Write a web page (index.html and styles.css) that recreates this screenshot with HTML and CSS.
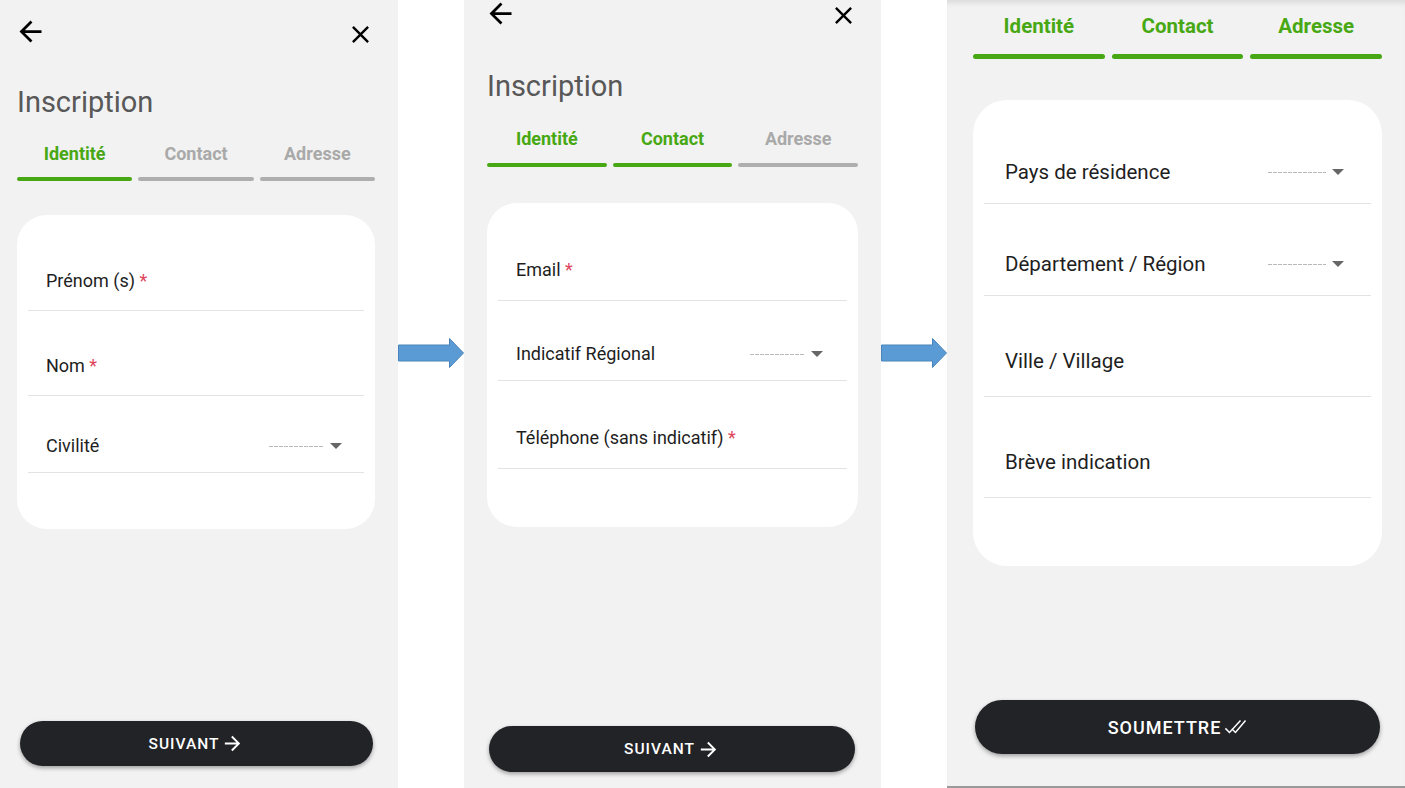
FILE: index.html
```html
<!DOCTYPE html>
<html lang="fr">
<head>
    <meta charset="UTF-8">
    <meta name="viewport" content="width=device-width, initial-scale=1.0">
    <title>Inscription - étapes</title>
    <link rel="stylesheet" href="styles.css">
</head>
<body>
    <div class="board">
        <!-- Step 1 : identité -->
        <section class="screen screen-1">
            <div class="topbar">
                <svg class="icon-back" viewBox="0 0 24 24"><path d="M20 11H7.83l5.59-5.59L12 4l-8 8 8 8 1.41-1.41L7.83 13H20v-2z"/></svg>
                <svg class="icon-close" viewBox="0 0 24 24"><path d="M19 6.41L17.59 5 12 10.59 6.41 5 5 6.41 10.59 12 5 17.59 6.41 19 12 13.41 17.59 19 19 17.59 13.41 12z"/></svg>
            </div>
            <h1 class="title">Inscription</h1>
            <div class="tabs">
                <div class="tab done"><span>Identité</span><i></i></div>
                <div class="tab"><span>Contact</span><i></i></div>
                <div class="tab"><span>Adresse</span><i></i></div>
            </div>
            <div class="card">
                <div class="field f-a"><span>Prénom (s) <b>*</b></span></div>
                <div class="field f-b"><span>Nom <b>*</b></span></div>
                <div class="field f-c select"><span>Civilité</span>
                    <span class="picker"><span class="dashes"></span><span class="caret"></span></span>
                </div>
            </div>
            <button class="btn">SUIVANT
                <svg viewBox="0 0 24 24"><path d="M4 11h12.17l-5.59-5.59L12 4l8 8-8 8-1.41-1.41L16.17 13H4z"/></svg>
            </button>
        </section>

        <div class="gap">
            <svg class="flow" viewBox="0 0 67 30"><path d="M0.5 7h51v-6.5l14 14.5-14 14.5v-6.5h-51z"/></svg>
        </div>

        <!-- Step 2 : contact -->
        <section class="screen screen-2">
            <div class="topbar">
                <svg class="icon-back" viewBox="0 0 24 24"><path d="M20 11H7.83l5.59-5.59L12 4l-8 8 8 8 1.41-1.41L7.83 13H20v-2z"/></svg>
                <svg class="icon-close" viewBox="0 0 24 24"><path d="M19 6.41L17.59 5 12 10.59 6.41 5 5 6.41 10.59 12 5 17.59 6.41 19 12 13.41 17.59 19 19 17.59 13.41 12z"/></svg>
            </div>
            <h1 class="title">Inscription</h1>
            <div class="tabs">
                <div class="tab done"><span>Identité</span><i></i></div>
                <div class="tab done"><span>Contact</span><i></i></div>
                <div class="tab"><span>Adresse</span><i></i></div>
            </div>
            <div class="card">
                <div class="field f-a"><span>Email <b>*</b></span></div>
                <div class="field f-b select"><span>Indicatif Régional</span>
                    <span class="picker"><span class="dashes"></span><span class="caret"></span></span>
                </div>
                <div class="field f-c"><span>Téléphone (sans indicatif) <b>*</b></span></div>
            </div>
            <button class="btn">SUIVANT
                <svg viewBox="0 0 24 24"><path d="M4 11h12.17l-5.59-5.59L12 4l8 8-8 8-1.41-1.41L16.17 13H4z"/></svg>
            </button>
        </section>

        <div class="gap">
            <svg class="flow" viewBox="0 0 67 30"><path d="M0.5 7h51v-6.5l14 14.5-14 14.5v-6.5h-51z"/></svg>
        </div>

        <!-- Step 3 : adresse -->
        <section class="screen screen-3">
            <div class="tabs">
                <div class="tab done"><span>Identité</span><i></i></div>
                <div class="tab done"><span>Contact</span><i></i></div>
                <div class="tab done"><span>Adresse</span><i></i></div>
            </div>
            <div class="card">
                <div class="field f-a select"><span>Pays de résidence</span>
                    <span class="picker"><span class="dashes"></span><span class="caret"></span></span>
                </div>
                <div class="field f-b select"><span>Département / Région</span>
                    <span class="picker"><span class="dashes"></span><span class="caret"></span></span>
                </div>
                <div class="field f-c"><span>Ville / Village</span></div>
                <div class="field f-d"><span>Brève indication</span></div>
            </div>
            <button class="btn">SOUMETTRE
                <svg class="checks" viewBox="0 0 24 24"><path d="M1.5 13.5l4.5 4.5L18 5M8.5 14l4 4L23.5 5"/></svg>
            </button>
        </section>
    </div>
</body>
</html>
```

FILE: styles.css
```css
* {
    box-sizing: border-box;
}

body {
    margin: 0;
    font-family: Roboto, "Noto Sans", Arial, sans-serif;
    background-color: #fff;
}

.board {
    display: flex;
    height: 788px;
}

.screen {
    display: flex;
    flex-direction: column;
    background-color: #f2f2f2;
    height: 100%;
}

.screen-1 {
    width: 398px;
    padding: 20px 23px 22px 17px;
}

.screen-2 {
    width: 417px;
    padding: 2px 23px 16px 23px;
}

.screen-3 {
    width: 458px;
    padding: 14px 23px 32px 26px;
    box-shadow: inset 0 6px 6px -4px rgba(0, 0, 0, 0.12);
    border-bottom: 2px solid #9a9a9a;
}

.gap {
    width: 66px;
    display: flex;
    align-items: center;
    padding-bottom: 82px;
}

.flow {
    width: 67px;
    height: 30px;
    flex-shrink: 0;
    fill: #5b9bd5;
    stroke: #4a84ba;
    stroke-width: 1;
}

/* top icons */
.topbar {
    display: flex;
    justify-content: space-between;
    align-items: center;
    height: 26px;
}

.icon-back {
    width: 33px;
    height: 33px;
    margin-left: -3px;
    margin-top: -3px;
}

.icon-close {
    width: 29px;
    height: 29px;
    margin-top: 3px;
}

.screen-2 .icon-back {
    margin-top: -4px;
}

.screen-2 .icon-close {
    margin-top: 0;
}

.title {
    margin: 39px 0 0;
    font-size: 29px;
    line-height: 34px;
    font-weight: 400;
    color: #585858;
}

.screen-2 .title {
    margin-top: 41px;
}

/* step tabs */
.tabs {
    display: flex;
    gap: 6px;
    margin-top: 24px;
}

.screen-2 .tabs {
    margin-top: 25px;
}

.screen-3 .tabs {
    margin-top: 0;
    gap: 7px;
}

.tab {
    flex: 1;
    display: flex;
    flex-direction: column;
    align-items: center;
}

.tab span {
    font-size: 18px;
    line-height: 22px;
    font-weight: 700;
    color: #a9a9a9;
}

.tab i {
    display: block;
    width: 100%;
    height: 4px;
    margin-top: 12px;
    border-radius: 3px;
    background-color: #aeaeae;
}

.screen-2 .tab i {
    margin-top: 13px;
}

.screen-3 .tab span {
    font-size: 20.5px;
    line-height: 24px;
}

.screen-3 .tab i {
    height: 5px;
    margin-top: 16px;
}

.tab.done span {
    color: #48a814;
}

.tab.done i {
    background-color: #48a814;
}

/* form card */
.card {
    background-color: #fff;
    border-radius: 30px;
    margin-top: 34px;
    padding: 0 11px 56px;
}

.screen-2 .card {
    margin-top: 36px;
    padding-bottom: 58px;
}

.screen-3 .card {
    margin-top: 41px;
    padding-bottom: 68px;
    border-radius: 34px;
}

.field {
    display: flex;
    align-items: flex-end;
    padding: 0 22px 19px 18px;
    border-bottom: 1.5px solid #e3e3e3;
    font-size: 18px;
    line-height: 20px;
    color: #1e1e1e;
}

.field b {
    color: #e0455c;
    font-weight: 400;
}

.field.select {
    padding-bottom: 16px;
}

.screen-1 .f-a { height: 96px; }
.screen-1 .f-b { height: 85px; }
.screen-1 .f-c { height: 77px; }

.screen-2 .field { padding-left: 18px; padding-right: 24px; }
.screen-2 .f-a { height: 98px; padding-bottom: 20px; }
.screen-2 .f-b { height: 80px; }
.screen-2 .f-c { height: 88px; padding-bottom: 20px; }

.screen-3 .field {
    font-size: 20.5px;
    line-height: 24px;
    padding: 0 27px 19px 21px;
}
.screen-3 .field.select { padding-bottom: 19px; }
.screen-3 .f-a { height: 104px; padding-bottom: 18px; }
.screen-3 .f-b { height: 92px; }
.screen-3 .f-c { height: 101px; padding-bottom: 23px; }
.screen-3 .f-d { height: 101px; padding-bottom: 23px; }

.picker {
    margin-left: auto;
    display: flex;
    align-items: center;
    gap: 6px;
    height: 20px;
}

.screen-3 .picker {
    height: 24px;
}

.dashes {
    display: block;
    width: 55px;
    height: 1px;
    background-image: repeating-linear-gradient(90deg, #b8b8b8 0 4px, transparent 4px 5px);
}

.screen-3 .dashes {
    width: 58px;
}

.caret {
    width: 0;
    height: 0;
    border-left: 6px solid transparent;
    border-right: 6px solid transparent;
    border-top: 6px solid #666;
}

/* bottom action */
.btn {
    margin-top: auto;
    display: flex;
    justify-content: center;
    align-items: center;
    gap: 2px;
    height: 45px;
    margin-left: 3px;
    margin-right: 2px;
    border: none;
    border-radius: 23px;
    background-color: #222327;
    color: #fff;
    font-family: Roboto, Arial, sans-serif;
    font-size: 15.5px;
    font-weight: 500;
    letter-spacing: 1px;
    box-shadow: 0 2px 4px rgba(0, 0, 0, 0.35);
    cursor: pointer;
}

.btn svg {
    width: 23px;
    height: 23px;
    fill: #fff;
}

.screen-2 .btn {
    height: 46px;
    margin-left: 2px;
    margin-right: 3px;
}

.screen-3 .btn {
    height: 54px;
    border-radius: 27px;
    font-size: 18px;
    margin-left: 2px;
    margin-right: 2px;
}

.btn .checks {
    width: 24px;
    height: 22px;
    fill: none;
    stroke: #fff;
    stroke-width: 1.6;
}
```
